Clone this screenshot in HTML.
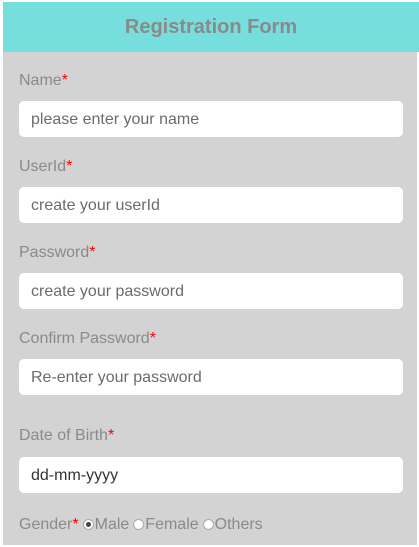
<!DOCTYPE html>
<html><head><style>
body{margin:0;background:#fff;width:419px;height:547px;overflow:hidden;font-family:"Liberation Sans",Arial,sans-serif}
.wrap{position:absolute;left:3px;top:2px;width:414px;height:543px;background:#d3d3d3}
.hdr{position:absolute;left:0;top:0;width:416px;height:50px;background:#77dede;color:#8a8a8a;font-weight:bold;font-size:20px;text-align:center;line-height:50px}
.lbl{position:absolute;left:16px;font-size:16px;color:#8a8a8a;line-height:18px}
.lbl b{color:#f00;font-weight:normal}
.in{position:absolute;left:16px;width:384px;height:36px;background:#fff;border-radius:5px;font-size:16px;color:#6b6b6b;line-height:38px;box-sizing:border-box;padding-left:12px}
.r{display:inline-block;width:11px;height:11px;border:1px solid #aaa;border-radius:50%;background:#fff;vertical-align:-1px;margin:0 1px 0 4px;position:relative;box-sizing:border-box}
.r.c::after{content:"";position:absolute;left:2px;top:2px;width:5px;height:5px;border-radius:50%;background:#444}
</style></head><body>
<div class="wrap">
<div class="hdr">Registration Form</div>
<div class="lbl" style="top:70px">Name<b>*</b></div>
<div class="in" style="top:99px">please enter your name</div>
<div class="lbl" style="top:156px">UserId<b>*</b></div>
<div class="in" style="top:185px">create your userId</div>
<div class="lbl" style="top:242px">Password<b>*</b></div>
<div class="in" style="top:271px">create your password</div>
<div class="lbl" style="top:328px">Confirm Password<b>*</b></div>
<div class="in" style="top:357px">Re-enter your password</div>
<div class="lbl" style="top:425px">Date of Birth<b>*</b></div>
<div class="in" style="top:455px;color:#333">dd-mm-yyyy</div>
<div class="lbl" style="top:514px">Gender<b>*</b><span class="r c"></span>Male<span class="r"></span>Female<span class="r"></span>Others</div>
</div>
</body></html>
